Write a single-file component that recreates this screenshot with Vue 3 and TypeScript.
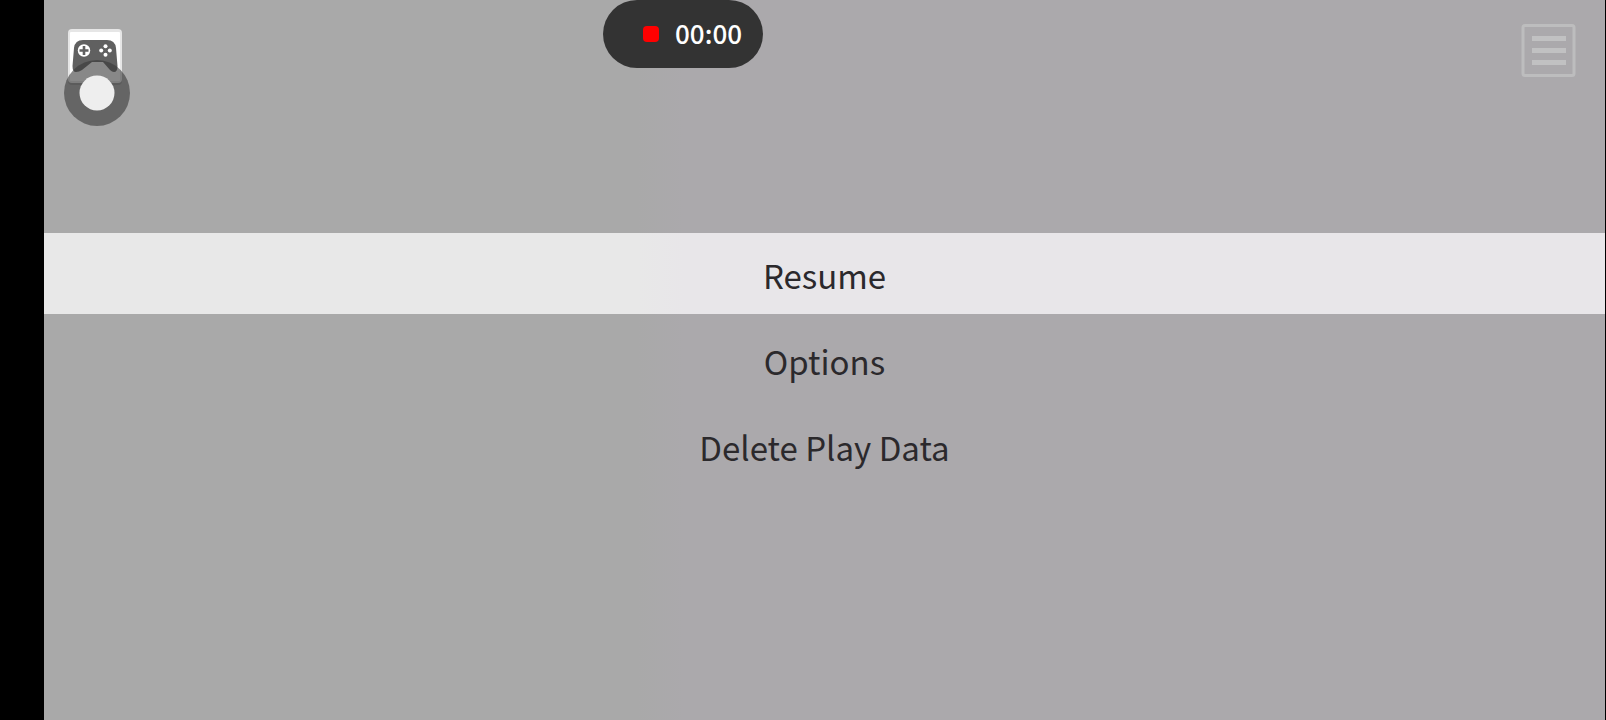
<script setup lang="ts">
import { ref } from 'vue'

const items: string[] = ['Resume', 'Options', 'Delete Play Data']
const selected = ref<number>(0)
const elapsed = ref<string>('00:00')
</script>

<template>
  <div class="device">
    <main class="screen">
      <header class="top">
        <button class="pad" type="button" aria-label="Game controls">
          <svg width="66" height="100" viewBox="0 0 66 100" aria-hidden="true">
            <rect x="4" y="4" width="54" height="54" rx="4" fill="#8f8f8f" />
            <rect x="4" y="2" width="54" height="54" rx="4" fill="#e6e6e6" />
            <rect x="6" y="5" width="50" height="49" rx="1" fill="#ffffff" />
            <path
              d="M19 13H43Q51 13 52 21L53.500 39Q53.500 45 50 45Q48 45 46 43L39 35H28L18 43Q15 45 12 45Q8.500 45 8.500 39L10 21Q11 13 19 13Z"
              fill="#606060"
            />
            <circle cx="20" cy="23.500" r="6.200" fill="#ffffff" />
            <path d="M20 19v9M15.500 23.500h9" stroke="#606060" stroke-width="2.600" />
            <g fill="#ffffff">
              <circle cx="41.500" cy="19.200" r="2" />
              <circle cx="41.500" cy="27.800" r="2" />
              <circle cx="37.200" cy="23.500" r="2" />
              <circle cx="45.800" cy="23.500" r="2" />
            </g>
            <circle cx="33" cy="66" r="33" fill="#383838" fill-opacity="0.600" />
            <circle cx="33" cy="66" r="17.500" fill="#eeeeee" />
          </svg>
        </button>
        <button class="list" type="button" aria-label="Menu">
          <svg width="56" height="54" viewBox="0 0 56 54" aria-hidden="true">
            <rect x="2" y="1.500" width="51" height="50" rx="2" fill="none" stroke="#bdbdbe" stroke-width="3" />
            <path d="M11 14.500H45M11 26.500H45M11 38.500H45" stroke="#c1c1c2" stroke-width="5" />
          </svg>
        </button>
      </header>

      <nav class="menu" aria-label="Pause menu">
        <button
          v-for="(item, i) in items"
          :key="item"
          type="button"
          class="item"
          :class="{ active: i === selected }"
          @click="selected = i"
        >
          {{ item }}
        </button>
      </nav>

      <div class="recorder" role="timer">
        <span class="dot"></span>
        <span class="time">{{ elapsed }}</span>
      </div>
    </main>
  </div>
</template>

<style>
body {
  margin: 0;
  background: #000;
}
</style>

<style scoped>
.device {
  box-sizing: border-box;
  min-height: 100vh;
  padding: 0 1px 0 44px;
  display: flex;
  background: #000;
  font-family: "Noto Sans CJK SC", "Noto Sans CJK JP", "Noto Sans", sans-serif;
}

.screen {
  position: relative;
  flex: 1;
  display: grid;
  grid-template-rows: 1fr auto 1fr;
  background: linear-gradient(90deg, #a9a9a9 0%, #a9a9a9 38%, #aba9ac 41%, #aba9ac 100%);
}

button {
  margin: 0;
  padding: 0;
  border: 0;
  background: none;
  color: inherit;
  font: inherit;
  cursor: pointer;
}

.top {
  display: flex;
  justify-content: space-between;
  align-items: flex-start;
  padding: 24px 28px 0 20px;
}

.top svg {
  display: block;
}

.pad {
  margin-top: 3px;
}

.menu {
  display: flex;
  flex-direction: column;
  gap: 5px;
  padding-bottom: 1px;
}

.item {
  height: 81px;
  padding-top: 4px;
  color: #2b292c;
  font-size: 33px;
  line-height: 75px;
  text-align: center;
}

.item.active {
  background: linear-gradient(90deg, #e8e8e8 0%, #e8e8e8 38%, #e8e6e9 41%, #e8e6e9 100%);
}

.recorder {
  position: absolute;
  top: 0;
  left: 559px;
  box-sizing: border-box;
  width: 160px;
  height: 68px;
  padding-left: 40px;
  display: flex;
  align-items: center;
  gap: 16px;
  border-radius: 34px;
  background: #333;
  color: #fff;
}

.dot {
  width: 16px;
  height: 16px;
  border-radius: 4px;
  background: #f00;
}

.time {
  padding-bottom: 2px;
  font-size: 26px;
  font-weight: 500;
  line-height: 32px;
}
</style>
